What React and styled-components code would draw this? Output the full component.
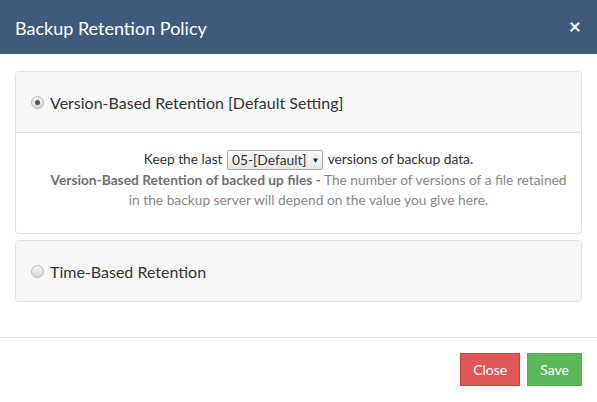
import styled, { createGlobalStyle } from "styled-components";

const Global = createGlobalStyle`
    html, body {
        margin: 0;
        padding: 0;
        background: #fff;
    }
    body {
        font-family: Lato, "Open Sans", sans-serif;
        color: #333;
    }
`;

const Modal = styled.div`
    width: 597px;
    height: 402px;
    display: flex;
    flex-direction: column;
    box-sizing: border-box;
`;

const Header = styled.div`
    height: 54px;
    background-color: #3f5a7a;
    display: flex;
    align-items: center;
    justify-content: space-between;
    padding: 0 15px;
    box-sizing: border-box;
`;

const Title = styled.h4`
    margin: 0;
    color: #fff;
    font-size: 18px;
    font-weight: 400;
    padding-top: 1px;
`;

const CloseX = styled.button`
    background: none;
    border: 0;
    padding: 0;
    color: #fff;
    font-family: Lato, sans-serif;
    font-size: 21px;
    font-weight: 700;
    line-height: 1;
    cursor: pointer;
    margin-top: -4px;
    margin-right: 1px;
`;

const Body = styled.div`
    padding: 17px 15px 0;
    display: flex;
    flex-direction: column;
    gap: 6px;
    height: 283px;
    flex-shrink: 0;
    box-sizing: border-box;
`;

const Panel = styled.div`
    border: 1px solid #e1e1e1;
    border-radius: 4px;
    overflow: hidden;
`;

const PanelHeading = styled.label`
    display: flex;
    align-items: center;
    height: 60px;
    padding: 0 15px;
    background-color: #f7f7f7;
    font-size: 16px;
    color: #333;
    gap: 6px;
`;

const Radio = styled.span`
    width: 11px;
    height: 11px;
    border-radius: 50%;
    border: 1px solid #b5b5b5;
    background: linear-gradient(#f4f4f4, #d9d9d9);
    display: flex;
    align-items: center;
    justify-content: center;
    flex-shrink: 0;
    margin-top: 1px;

    &::after {
        content: "";
        width: 5px;
        height: 5px;
        border-radius: 50%;
        background: ${(p) => (p.checked ? "#555" : "transparent")};
    }
`;

const PanelBody = styled.div`
    border-top: 1px solid #e1e1e1;
    height: 101px;
    box-sizing: border-box;
    padding: 15px 0 0 20px;
    text-align: center;
    font-size: 13.75px;
    line-height: 20px;
    white-space: nowrap;
`;

const KeepLine = styled.div`
    color: #333;
    line-height: 22px;
`;

const Select = styled.span`
    display: inline-flex;
    align-items: center;
    height: 18px;
    padding: 0 3px 0 4px;
    border: 1px solid #a9a9a9;
    border-radius: 2px;
    background: linear-gradient(#fafafa, #e6e6e6);
    color: #333;
    vertical-align: middle;
    margin: -2px 1px 0;
    gap: 5px;
`;

const Caret = styled.span`
    font-size: 8px;
    color: #222;
`;

const Note = styled.div`
    color: #888;
`;

const Strong = styled.b`
    color: #707070;
    font-weight: 700;
`;

const Footer = styled.div`
    border-top: 1px solid #e5e5e5;
    padding: 15px 15px;
    display: flex;
    justify-content: flex-end;
    gap: 7px;
`;

const Button = styled.button`
    height: 33px;
    padding: 0 ${(p) => p.$pad}px;
    border: 1px solid ${(p) => p.$border};
    background-color: ${(p) => p.$bg};
    color: #fff;
    font-family: Lato, sans-serif;
    font-size: 14px;
    border-radius: 0;
    cursor: pointer;
`;

const App = () => {
    return (
        <Modal>
            <Global />
            <Header>
                <Title>Backup Retention Policy</Title>
                <CloseX>×</CloseX>
            </Header>
            <Body>
                <Panel>
                    <PanelHeading>
                        <Radio checked />
                        Version-Based Retention [Default Setting]
                    </PanelHeading>
                    <PanelBody>
                        <KeepLine>
                            Keep the last{" "}
                            <Select>
                                05-[Default]
                                <Caret>▼</Caret>
                            </Select>{" "}
                            versions of backup data.
                        </KeepLine>
                        <Note>
                            <Strong>Version-Based Retention of backed up files -</Strong> The number of
                            versions of a file retained
                            <br />
                            in the backup server will depend on the value you give here.
                        </Note>
                    </PanelBody>
                </Panel>
                <Panel>
                    <PanelHeading>
                        <Radio />
                        Time-Based Retention
                    </PanelHeading>
                </Panel>
            </Body>
            <Footer>
                <Button $bg="#e05757" $border="#d43f3a" $pad={12}>
                    Close
                </Button>
                <Button $bg="#5cb85c" $border="#4cae4c" $pad={12}>
                    Save
                </Button>
            </Footer>
        </Modal>
    );
};

export default App;
